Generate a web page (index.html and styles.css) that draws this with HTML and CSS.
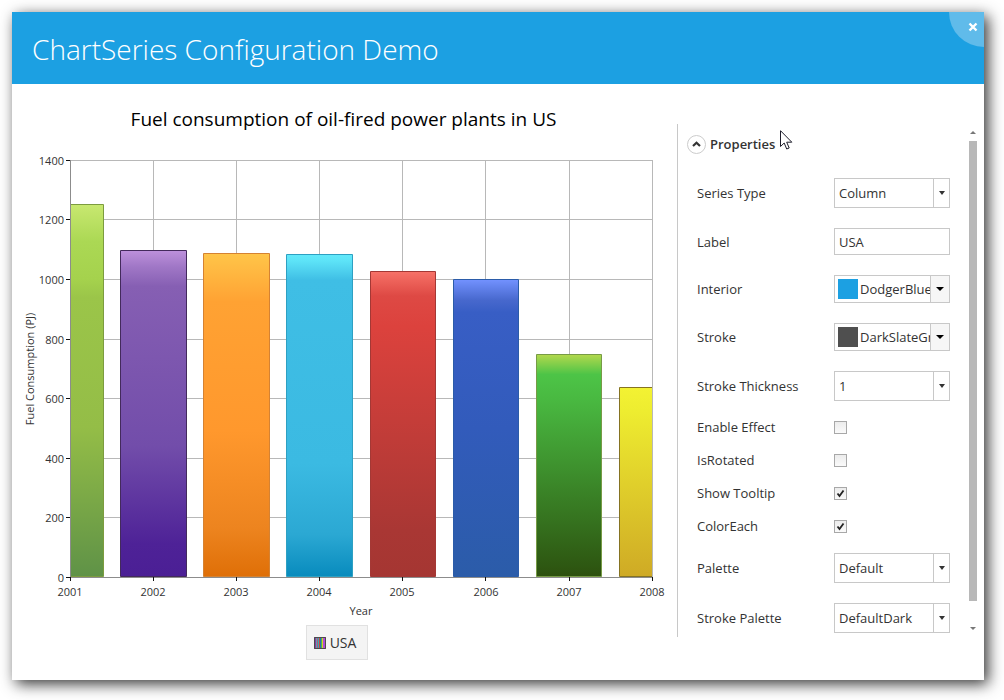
FILE: index.html
```html
<!DOCTYPE html>
<html lang="en">
<head>
<meta charset="utf-8">
<title>ChartSeries Configuration Demo</title>
<link rel="stylesheet" href="styles.css">
</head>
<body>
<main class="window">
  <header class="window-header">
    <h1 class="window-title">ChartSeries Configuration Demo</h1>
    <button class="close" type="button" aria-label="Close"><svg width="10" height="10" viewBox="0 0 10 10"><path d="M1.5 1.5L8.500 8.500M8.500 1.500L1.500 8.500" fill="none" stroke="#fff" stroke-width="2.400"/></svg></button>
  </header>
  <div class="content">
    <section class="chart">
      <h2 class="chart-title">Fuel consumption of oil-fired power plants in US</h2>
      <svg class="plot" viewBox="12 150 665 470" role="img" aria-label="Fuel consumption by year">
        <defs>
          <linearGradient id="g1" x2="0" y2="1"><stop offset="0" stop-color="#c8e870"/><stop offset=".1" stop-color="#abd854"/><stop offset=".2" stop-color="#a5d24d"/><stop offset=".25" stop-color="#9bc549"/><stop offset=".6" stop-color="#94bd47"/><stop offset="1" stop-color="#5f9247"/></linearGradient>
          <linearGradient id="g2" x2="0" y2="1"><stop offset="0" stop-color="#bd91dc"/><stop offset=".05" stop-color="#a077c6"/><stop offset=".11" stop-color="#865fb3"/><stop offset=".6" stop-color="#724daa"/><stop offset=".9" stop-color="#4e2297"/><stop offset="1" stop-color="#4b1f95"/></linearGradient>
          <linearGradient id="g3" x2="0" y2="1"><stop offset="0" stop-color="#ffc549"/><stop offset=".15" stop-color="#ffa233"/><stop offset=".55" stop-color="#ff982d"/><stop offset=".85" stop-color="#ed841f"/><stop offset="1" stop-color="#df6f07"/></linearGradient>
          <linearGradient id="g4" x2="0" y2="1"><stop offset="0" stop-color="#62e9fb"/><stop offset=".02" stop-color="#5de3f7"/><stop offset=".08" stop-color="#3fbee5"/><stop offset=".65" stop-color="#3bbae2"/><stop offset=".87" stop-color="#2ba8d3"/><stop offset="1" stop-color="#088bbd"/></linearGradient>
          <linearGradient id="g5" x2="0" y2="1"><stop offset="0" stop-color="#f77268"/><stop offset=".08" stop-color="#de4944"/><stop offset=".18" stop-color="#dc423d"/><stop offset=".85" stop-color="#a93734"/><stop offset="1" stop-color="#a53632"/></linearGradient>
          <linearGradient id="g6" x2="0" y2="1"><stop offset="0" stop-color="#7392ff"/><stop offset=".07" stop-color="#4768cd"/><stop offset=".11" stop-color="#385ec5"/><stop offset=".5" stop-color="#325bbb"/><stop offset="1" stop-color="#2b5ca9"/></linearGradient>
          <linearGradient id="g7" x2="0" y2="1"><stop offset="0" stop-color="#b3d84d"/><stop offset=".09" stop-color="#4dc447"/><stop offset=".2" stop-color="#49b941"/><stop offset=".95" stop-color="#2e5812"/><stop offset="1" stop-color="#2d500e"/></linearGradient>
          <linearGradient id="g8" x2="0" y2="1"><stop offset="0" stop-color="#f3f233"/><stop offset=".12" stop-color="#eeed30"/><stop offset="1" stop-color="#cfaa25"/></linearGradient>
        </defs>
        <path class="grid" d="M70 160.500H653M70 219.500H653M70 279.500H653M70 339.500H653M70 398.500H653M70 458.500H653M70 517.500H653M153.500 160V577M236.500 160V577M319.500 160V577M402.500 160V577M485.500 160V577M569.500 160V577"/>
        <path fill="url(#g1)" stroke="#7c9c3f" d="M70.500 204.500H103.500V576.500H70.500Z"/>
        <path fill="url(#g2)" stroke="#432a5c" d="M120.500 250.500H186.500V576.500H120.500Z"/>
        <path fill="url(#g3)" stroke="#d58232" d="M203.500 253.500H269.500V576.500H203.500Z"/>
        <path fill="url(#g4)" stroke="#2ea0c2" d="M286.500 254.500H352.500V576.500H286.500Z"/>
        <path fill="url(#g5)" stroke="#a43835" d="M370.500 271.500H435.500V576.500H370.500Z"/>
        <path fill="url(#g6)" stroke="#2b5ca9" d="M453.500 279.500H518.500V576.500H453.500Z"/>
        <path fill="url(#g7)" stroke="#779b46" d="M536.500 354.500H601.500V576.500H536.500Z"/>
        <path fill="url(#g8)" d="M619.500 387.500H652.500V576.500H619.500Z"/>
        <path fill="none" stroke="#857322" d="M652 387.500H619.500V576.500H652"/>
        <path class="grid" d="M652.500 160V577"/>
        <path class="axis" d="M70.500 160V577.500H653"/>
        <path class="tick" d="M66 160.500H70M66 219.500H70M66 279.500H70M66 339.500H70M66 398.500H70M66 458.500H70M66 517.500H70M66 577.500H70M70.500 577V581M153.500 577V581M236.500 577V581M319.500 577V581M402.500 577V581M485.500 577V581M569.500 577V581M652.500 577V581"/>
        <g class="labels labels-y">
          <text x="64" y="165">1400</text><text x="64" y="224">1200</text><text x="64" y="284">1000</text><text x="64" y="344">800</text><text x="64" y="403">600</text><text x="64" y="463">400</text><text x="64" y="522">200</text><text x="64" y="582">0</text>
        </g>
        <g class="labels">
          <text x="70" y="596">2001</text><text x="153" y="596">2002</text><text x="236" y="596">2003</text><text x="319" y="596">2004</text><text x="402" y="596">2005</text><text x="486" y="596">2006</text><text x="569" y="596">2007</text><text x="652" y="596">2008</text>
          <text x="361" y="615">Year</text>
          <text transform="translate(34 369) rotate(-90)">Fuel Consumption (PJ)</text>
        </g>
      </svg>
      <div class="legend">
        <svg width="12" height="12" viewBox="0 0 12 12"><path fill="#8a3f9c" d="M0 0H12V12H0Z"/><path fill="#5f9db5" d="M2 1H3V11H2Z"/><path fill="#b05a78" d="M3 1H4V11H3Z"/><path fill="#35aab5" d="M4 1H5V11H4Z"/><path fill="#c24848" d="M5 1H6V11H5Z"/><path fill="#3465b8" d="M6 1H7V11H6Z"/><path fill="#45b94a" d="M7 1H8V11H7Z"/><path fill="#dccb30" d="M8 1H9V11H8Z"/><path fill="#b04cd8" d="M9 1H11V11H9Z"/><path fill="none" stroke="#4c4c4c" d="M.5 .5H11.500V11.500H.5Z"/></svg>
        <span>USA</span>
      </div>
    </section>
    <aside class="panel">
      <form class="properties">
        <button class="section-toggle" type="button" aria-expanded="true"><span class="toggle-ring"><svg width="9" height="6" viewBox="0 0 9 6"><path d="M1 5L4.500 1.700L8 5" fill="none" stroke="#333" stroke-width="2.200"/></svg></span>Properties</button>
        <div class="fields">
          <label for="type">Series Type</label>
          <div class="dropdown"><select id="type"><option>Column</option></select><span class="arrow"></span></div>
          <label for="label">Label</label>
          <input class="text" id="label" type="text" value="USA">
          <label for="interior">Interior</label>
          <button class="color" id="interior" type="button"><span class="swatch swatch-blue"></span><span class="color-name">DodgerBlue</span><span class="color-arrow"></span></button>
          <label for="stroke">Stroke</label>
          <button class="color" id="stroke" type="button"><span class="swatch swatch-slate"></span><span class="color-name">DarkSlateGray</span><span class="color-arrow"></span></button>
          <label for="thickness">Stroke Thickness</label>
          <div class="dropdown"><select id="thickness"><option>1</option></select><span class="arrow"></span></div>
          <label class="check-label" for="effect">Enable Effect</label>
          <span class="check"><input id="effect" type="checkbox"></span>
          <label class="check-label" for="rotated">IsRotated</label>
          <span class="check"><input id="rotated" type="checkbox"></span>
          <label class="check-label" for="tooltip">Show Tooltip</label>
          <span class="check"><input id="tooltip" type="checkbox" checked><svg viewBox="0 0 13 13"><path d="M3.500 6.500L5.500 9L9.500 3.500" fill="none" stroke="#222" stroke-width="1.800"/></svg></span>
          <label class="check-label" for="each">ColorEach</label>
          <span class="check"><input id="each" type="checkbox" checked><svg viewBox="0 0 13 13"><path d="M3.500 6.500L5.500 9L9.500 3.500" fill="none" stroke="#222" stroke-width="1.800"/></svg></span>
          <label for="palette">Palette</label>
          <div class="dropdown"><select id="palette"><option>Default</option></select><span class="arrow"></span></div>
          <label for="spalette">Stroke Palette</label>
          <div class="dropdown"><select id="spalette"><option>DefaultDark</option></select><span class="arrow"></span></div>
        </div>
      </form>
      <div class="scrollbar">
        <button class="scroll-step" type="button" aria-label="Scroll up"><svg width="6" height="3" viewBox="0 0 6 3"><path fill="#777" d="M0 3L3 0L6 3Z"/></svg></button>
        <div class="track"><div class="thumb"></div></div>
        <button class="scroll-step" type="button" aria-label="Scroll down"><svg width="6" height="3" viewBox="0 0 6 3"><path fill="#777" d="M0 0L3 3L6 0Z"/></svg></button>
      </div>
    </aside>
  </div>
</main>
<svg class="cursor" width="13" height="21" viewBox="0 0 13 21"><path d="M.5 .7V16.500L4.200 13L6.700 19L9.200 18L6.700 12.200H11.800Z" fill="#fff" stroke="#1d1d2b"/></svg>
</body>
</html>
```
FILE: styles.css
```css
* { box-sizing: border-box; }

body {
  margin: 0;
  min-height: 100vh;
  padding: 12px 20px 20px 12px;
  display: flex;
  background: #fff;
  color: #333;
  font: 13px/20px "Open Sans", "Noto Sans", sans-serif;
}

button, input, select { font: inherit; color: inherit; }
svg { display: block; }

.window {
  flex: 1;
  display: flex;
  flex-direction: column;
  background: #fff;
  box-shadow: 4px 4px 14px rgba(0, 0, 0, .8);
}

.window-header {
  height: 72px;
  display: flex;
  justify-content: space-between;
  background: #1ca0e2;
  color: #fff;
  overflow: hidden;
}
.window-title {
  margin: 0;
  padding-left: 20px;
  font-size: 28px;
  font-weight: 300;
  line-height: 74px;
}
.close {
  width: 35px;
  height: 35px;
  padding: 0 0 5px 19px;
  border: 0;
  border-bottom-left-radius: 35px;
  background: #60bbea;
}

.content { flex: 1; display: flex; }
.chart {
  flex: 1;
  min-width: 0;
  display: flex;
  flex-direction: column;
}
.chart-title {
  margin: 0;
  padding: 20px 2px 16px 0;
  color: #000;
  font-size: 19px;
  font-weight: 400;
  line-height: 30px;
  text-align: center;
}
.plot { width: 100%; }
.grid { fill: none; stroke: #b8b8b8; }
.axis { fill: none; stroke: #8c8c8c; }
.tick { fill: none; stroke: #111; }
.labels { font-size: 11px; fill: #333; text-anchor: middle; }
.labels-y { text-anchor: end; }
.legend {
  display: flex;
  align-items: center;
  align-self: center;
  gap: 4px;
  height: 35px;
  margin: 5px 15px 0 0;
  padding: 0 11px 0 7px;
  border: 1px solid #e1e1e1;
  background: #f4f4f4;
  font-size: 14px;
}

.panel {
  flex: 0 0 307px;
  display: flex;
  justify-content: space-between;
  align-self: flex-start;
  margin-top: 40px;
  padding-right: 7px;
  border-left: 1px solid #c8c8c8;
}
.properties { width: 272px; padding: 10px 0 4px; }
.section-toggle {
  display: flex;
  align-items: center;
  gap: 4px;
  margin-left: 9px;
  padding: 0;
  border: 0;
  background: none;
  font-weight: 600;
}
.toggle-ring {
  display: grid;
  place-items: center;
  width: 19px;
  height: 19px;
  border: 1px solid #ccc;
  border-radius: 50%;
}
.fields {
  display: grid;
  grid-template-columns: 1fr 116px;
  row-gap: 20px;
  align-items: center;
  margin-top: 24px;
  padding-left: 19px;
}
.check-label { line-height: 13px; }

.dropdown { display: grid; height: 30px; }
.dropdown select {
  grid-area: 1 / 1;
  width: 100%;
  appearance: none;
  padding: 0 20px 0 4px;
  border: 1px solid #c8c8c8;
  border-radius: 0;
  background: #fff;
}
.arrow {
  grid-area: 1 / 1;
  justify-self: end;
  width: 17px;
  border-left: 1px solid #c8c8c8;
  display: grid;
  place-items: center;
  margin-block: 1px;
  pointer-events: none;
}
.arrow::before, .color-arrow::before {
  content: "";
  border: solid transparent;
  border-width: 4px 3px 0;
  border-top-color: #333;
}
.text {
  width: 100%;
  height: 27px;
  padding: 0 4px;
  border: 1px solid #c8c8c8;
}
.color {
  display: flex;
  align-items: center;
  width: 100%;
  height: 28px;
  padding: 0 0 0 3px;
  border: 1px solid #c8c8c8;
  background: #fff;
  text-align: left;
}
.swatch { flex: 0 0 20px; height: 20px; margin-right: 2px; }
.swatch-blue { background: #1ca0e2; }
.swatch-slate { background: #4f4f4f; }
.color-name { flex: 1; overflow: hidden; white-space: nowrap; }
.color-arrow {
  flex: 0 0 19px;
  align-self: stretch;
  display: grid;
  place-items: center;
  border-left: 1px solid #c8c8c8;
  background: #f6f6f6;
}
.color-arrow::before { border-width: 4px 4px 0; border-top-color: #000; }

.check { display: grid; width: 13px; height: 13px; }
.check > * { grid-area: 1 / 1; }
.check input {
  appearance: none;
  width: 13px;
  height: 13px;
  margin: 0;
  border: 1px solid #a8a8a8;
  background: linear-gradient(#ececec, #fafafa);
}
.check svg { position: relative; pointer-events: none; }

.scrollbar { width: 8px; display: flex; flex-direction: column; }
.scroll-step {
  height: 17px;
  padding: 0;
  border: 0;
  background: none;
  display: grid;
  place-items: center;
}
.track { flex: 1; }
.thumb { height: 96%; background: #b8b8b8; }

.cursor { position: absolute; left: 780px; top: 130px; pointer-events: none; }
```
